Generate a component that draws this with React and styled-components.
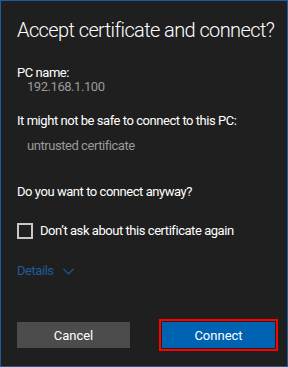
import React, { useState } from 'react';
import styled, { createGlobalStyle } from 'styled-components';

const GlobalStyle = createGlobalStyle`
  html, body {
    margin: 0;
    padding: 0;
    background: #1f1f1f;
  }
  * {
    box-sizing: border-box;
  }
`;

const Dialog = styled.div`
  width: 288px;
  height: 367px;
  background: #1f1f1f;
  border: 1px solid #1b5c9c;
  padding: 16px 12px 0 16px;
  display: flex;
  flex-direction: column;
  font-family: Roboto, 'Liberation Sans', sans-serif;
  color: #ffffff;
`;

const Title = styled.h1`
  margin: 0;
  font-size: 20px;
  font-weight: 300;
  line-height: 26px;
  letter-spacing: -0.6px;
  white-space: nowrap;
`;

const Label = styled.div`
  margin-top: ${({ gap }) => gap}px;
  font-size: 13px;
  line-height: 16px;
  letter-spacing: -0.45px;
`;

const Value = styled.div`
  margin-top: ${({ gap }) => gap}px;
  padding-left: 10px;
  font-size: 13px;
  line-height: 16px;
  letter-spacing: -0.45px;
  color: #9a9a9a;
`;

const CheckRow = styled.label`
  margin-top: 23px;
  display: flex;
  align-items: center;
  gap: 7px;
  font-size: 13px;
  line-height: 16px;
  letter-spacing: -0.45px;
  cursor: pointer;
`;

const Box = styled.span`
  width: 16px;
  height: 16px;
  border: 2px solid #c8c8c8;
  flex-shrink: 0;
`;

const Details = styled.button`
  margin-top: 24px;
  align-self: flex-start;
  display: flex;
  align-items: center;
  gap: 9px;
  padding: 0;
  border: none;
  background: none;
  font-family: inherit;
  font-size: 13px;
  line-height: 16px;
  letter-spacing: -0.45px;
  color: #1f5c99;
  cursor: pointer;
`;

const Buttons = styled.div`
  margin-top: auto;
  margin-bottom: 18px;
  display: grid;
  grid-template-columns: 113px 113px;
  justify-content: space-between;
`;

const Button = styled.button`
  height: 26px;
  border: none;
  padding: 0;
  font-family: inherit;
  font-size: 13px;
  color: #ffffff;
  background: ${({ primary }) => (primary ? '#0063b1' : '#4c4c4c')};
  box-shadow: ${({ focused }) =>
    focused ? '0 0 0 1px #1f1f1f, 0 0 0 3px #ff0000' : 'none'};
  cursor: pointer;
`;

const App = () => {
  const [checked, setChecked] = useState(false);

  return (
    <>
      <GlobalStyle />
      <Dialog>
        <Title>Accept certificate and connect?</Title>
        <Label gap={22}>PC name:</Label>
        <Value gap={-2}>192.168.1.100</Value>
        <Label gap={18}>It might not be safe to connect to this PC:</Label>
        <Value gap={9}>untrusted certificate</Value>
        <Label gap={30}>Do you want to connect anyway?</Label>
        <CheckRow onClick={() => setChecked(!checked)}>
          <Box />
          Don’t ask about this certificate again
        </CheckRow>
        <Details>
          Details
          <svg width="11" height="7" viewBox="0 0 11 7" fill="none">
            <path d="M0.5 0.8 L5.5 5.8 L10.5 0.8" stroke="#1f5c99" strokeWidth="1.2" />
          </svg>
        </Details>
        <Buttons>
          <Button>Cancel</Button>
          <Button primary focused>Connect</Button>
        </Buttons>
      </Dialog>
    </>
  );
};

export default App;
